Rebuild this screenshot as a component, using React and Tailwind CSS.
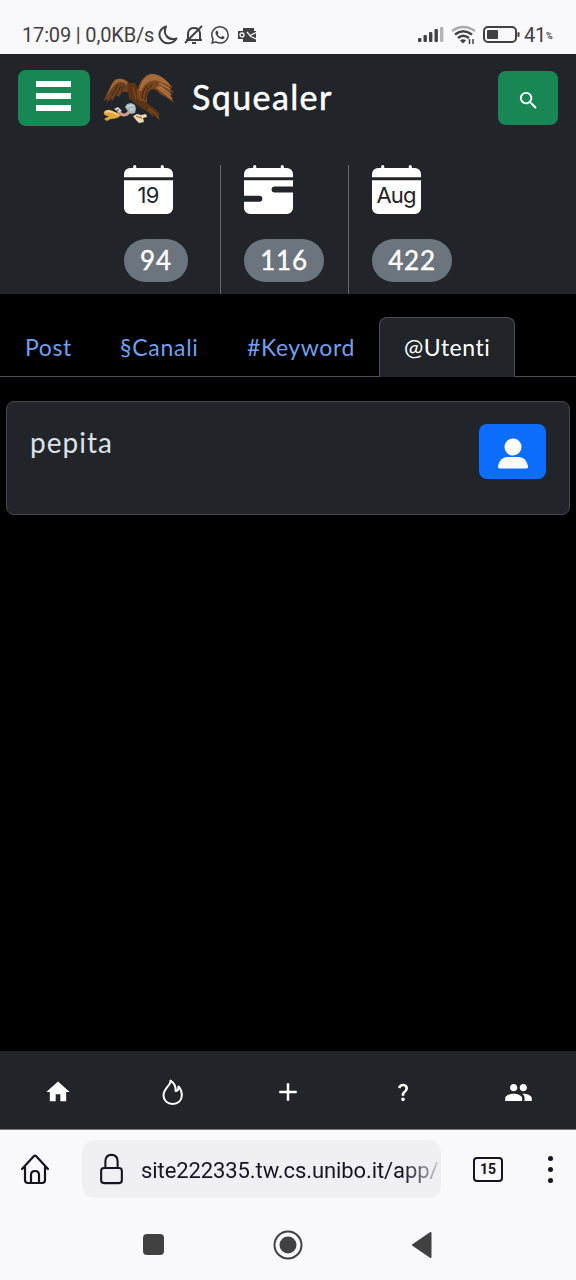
import { MdHome, MdAdd, MdPeople, MdSearch, MdQuestionMark } from "react-icons/md";
import { BsCalendarFill, BsCalendarRangeFill, BsWhatsapp } from "react-icons/bs";

function Vulture() {
  return (
    <svg viewBox="0 0 72 50" className="h-[50px] w-[72px]">
      <path d="M31 9 L27 10 C22 4 15 3 11 7 C6 13 4 21 0 27 L4 25 L4 28 L8 24 L9 27 L13 21 L16 23 L19 18 L25 18 L27 26 Z" fill="#6b4020" />
      <path d="M27 11 C22 4 15 3 11 7 C8 11 6 17 3 22 C8 16 12 8 18 8 Q22 8 25 13Z" fill="#a0683a" />
      <path d="M15 11 L8 23 M18 12 L13 21 M21 12 L18 18" stroke="#3b2210" strokeWidth="0.8" fill="none" />
      <path d="M24 9 L32 9 L37 20 L45 30 L52 35 L57 40 L55 42 L58 48 L50 40 L45 38 L40 35 L33 30 L26 24 Z" fill="#5a3414" />
      <path d="M34 22 C34 12 39 2 47 0 C57 -1 63 6 70 14 L66 13 L71 19 L66 18 L71 29 L63 23 L57 20 C52 14 47 13 44 22 L44 29 L36 26 Z" fill="#75461f" />
      <path d="M36 17 C38 5 44 0 50 0 C59 1 65 8 69 13 L58 8 C50 4 42 8 38 17 Z" fill="#a46a38" />
      <path d="M56 9 L67 15 M56 12 L68 21 M54 13 L69 25" stroke="#b0713c" strokeWidth="1.8" fill="none" />
      <path d="M49 11 Q43 15 42 26 M44 12 Q39 17 39 25" stroke="#3b2210" strokeWidth="1" fill="none" />
      <path d="M30 13 L33 25 M34 15 L39 27 M46 34 L56 44 M45 36 L50 42" stroke="#854c20" strokeWidth="1.1" fill="none" />
      <path d="M1 38 C4 34 9 36 13 39 L18 41 C15 46 9 43 4 47 L1 45 L6 42 C2 42 0 40 1 38Z" fill="#dda83e" />
      <path d="M2 38 Q8 36 15 41" stroke="#f7d47a" strokeWidth="1.8" fill="none" />
      <path d="M15 37 Q21 45 27 37" stroke="#d1998a" strokeWidth="3" fill="none" />
      <path d="M11 35 L15 33 L19 37 L16 38Z" fill="#e2dde3" />
      <circle cx="15" cy="36" r=".8" fill="#222" />
      <path d="M22 33 L24 30 L28 29 L32 31 L33 35 L32 39 L28 40 L24 36 Z" fill="#a9babe" />
      <path d="M24 33 L28 31 L31 32 M27 36 L31 35" stroke="#e0e8ea" fill="none" />
      <path d="M30 42 L34 40 L38 41 L43 40 L44 43 L40 44 L41 48 L36 49 L33 46 Z" fill="#f0d9b2" />
      <path d="M33 42 L37 44 M37 42 L39 45" stroke="#855d35" strokeWidth="1" />
    </svg>
  );
}

function StatusBar() {
  return (
    <div className="flex h-[54px] shrink-0 items-center bg-[#f9f9fb] pt-[15px] pl-[22px] font-[Roboto] text-[20px] text-[#414143]">
      <span className="w-[133px] whitespace-nowrap tracking-[-0.16px]">17:09 | 0,0KB/s</span>
      <svg viewBox="0 0 20 20" className="ml-[3px] size-5" fill="none" stroke="currentColor" strokeWidth="2" strokeLinejoin="round">
        <path d="M8 1.5 C2 3.5 0 9 2.5 13.5 C6 20 15 19.5 18.5 13.5 C10 16 4.500 9 8 1.500Z" />
      </svg>
      <svg viewBox="0 0 20 20" className="ml-[6px] size-5" fill="none" stroke="currentColor" strokeWidth="2">
        <path d="M4 15 V8 Q5 3 10 3 Q15 3 16 8 V15 M2 15 H18 M8 18 H12 M18 1 L1 18" />
      </svg>
      <BsWhatsapp className="ml-[7px] size-[18px]" />
      <svg viewBox="0 0 18 14" className="ml-[9px] h-[14px] w-[18px]">
        <path d="M5 0H16V3H18V14H5Z M0 3H9V11H0Z" fill="#414143" />
        <circle cx="4" cy="7" r="2" fill="none" stroke="#f9f9fb" strokeWidth="1.3" />
        <path d="M9 4 L12 7.5 L18 4.500 M12 8 L18 11" stroke="#f9f9fb" strokeWidth="1.2" fill="none" />
      </svg>
      <svg viewBox="0 0 26 18" className="ml-[162px] h-[18px] w-[26px]" fill="#414143">
        <rect y="12" width="3.4" height="4" rx="1" />
        <rect x="5.5" y="9" width="3.4" height="7" rx="1" />
        <rect x="11" y="6" width="3.4" height="10" rx="1" />
        <rect x="16.5" y="3" width="3.4" height="13" rx="1" />
        <rect x="22" y="1" width="3.4" height="15" rx="1" fill="#b4b4b6" />
      </svg>
      <svg viewBox="0 0 25 20" className="ml-[7px] h-5 w-[25px]" fill="none" stroke="#414143" strokeWidth="2.5">
        <path d="M1 6 Q12 -2 24 6" stroke="#aaaaac" />
        <path d="M4 9.5 Q12 3 21 9.5 M7 13 Q12 8.5 18 13" />
        <path d="M9 15.5 Q12 13 15 15.5 L12 18.5Z" fill="#414143" stroke="none" />
        <path d="M18.5 14V19 M22 19V14" strokeWidth="1.5" />
      </svg>
      <svg viewBox="0 0 37 17" className="ml-[7px] h-[17px] w-[37px]">
        <rect x="1" y="1" width="32" height="15" rx="4" fill="none" stroke="#414143" strokeWidth="2" />
        <rect x="4" y="4" width="11" height="9" rx="1" fill="#414143" />
        <rect x="34.5" y="6" width="2" height="5" rx="1" fill="#414143" />
      </svg>
      <span className="ml-[4px] tracking-[-0.2px]">41</span>
      <span className="mt-1 text-[9px] font-bold">%</span>
    </div>
  );
}

function Header() {
  return (
    <header className="h-[240px] shrink-0 bg-[#212529]">
      <div className="flex h-[86px] items-center px-[18px]">
        <button className="mt-[2px] flex h-[56px] w-[72px] flex-col items-center gap-[6px] rounded-lg bg-[#198754] pt-[11px] pr-px">
          <span className="h-[6px] w-[35px] bg-white" />
          <span className="h-[6px] w-[35px] bg-white" />
          <span className="h-[6px] w-[35px] bg-white" />
        </button>
        <div className="mt-[3px] ml-[13px]"><Vulture /></div>
        <h1 className="-mt-px ml-[17px] font-[Lato] text-[34px] tracking-[1.4px] text-white [-webkit-text-stroke:0.5px_white]">Squealer</h1>
        <button className="mt-0.5 ml-auto flex h-[54px] w-[60px] items-center justify-center rounded-lg bg-[#198754] pt-1 text-white">
          <MdSearch className="size-[23px]" />
        </button>
      </div>
      <div className="flex pt-[25px] font-[Lato] text-[26px] tracking-[0.8px] text-white">
        <Quota icon={<BsCalendarFill className="size-[49px]" />} label="19" value="94" className="w-[221px] border-r pl-[124px]" pill="w-16" />
        <Quota icon={<BsCalendarRangeFill className="size-[49px]" />} label="" value="116" className="w-[128px] border-r pl-[23px]" pill="w-20" />
        <Quota icon={<BsCalendarFill className="size-[49px]" />} label="Aug" value="422" className="pl-[23px]" pill="w-20" />
      </div>
    </header>
  );
}

function Quota({ icon, label, value, className, pill }) {
  return (
    <div className={`h-[129px] border-[#64686c] ${className}`}>
      <div className="relative h-[49px]">
        {icon}
        <span className="absolute top-[17px] left-0 w-[48px] text-center font-[Inter] text-[22px] leading-[26px] tracking-[-0.9px] text-[#212529]">{label}</span>
      </div>
      <div className={`mt-[25px] flex h-[43px] items-center justify-center rounded-full bg-[#6c757d] [-webkit-text-stroke:0.4px_white] ${pill}`}>{value}</div>
    </div>
  );
}

function Tabs() {
  return (
    <nav className="mt-[23px] flex h-[60px] shrink-0 border-b border-[#495057] font-[Lato] text-[23px] text-[#719fee]">
      <a className="w-[95px] pt-[13px] pl-[25px] tracking-[0.6px]">Post</a>
      <a className="w-[128px] pt-[13px] pl-[25px] tracking-[0.75px]">§Canali</a>
      <a className="w-[156px] pt-[13px] pl-[24px] tracking-[0.6px]">#Keyword</a>
      <a className="h-[60px] w-[136px] rounded-t-lg border border-b-0 border-[#495057] bg-[#212529] pt-[12px] pl-[24px] tracking-[0.5px] text-white">@Utenti</a>
    </nav>
  );
}

export default function App() {
  return (
    <div className="flex h-[1280px] w-[576px] flex-col overflow-hidden bg-black">
      <StatusBar />
      <Header />
      <Tabs />
      <main className="flex-1 px-[6px] pt-6">
        <section className="flex h-[114px] items-start justify-between rounded-lg border border-[#43474b] bg-[#212529] px-[23px] pt-[22px]">
          <span className="pt-px font-[Lato] text-[28px] leading-[34px] tracking-[1px] text-[#dee2e6]">pepita</span>
          <button className="flex h-[55px] w-[67px] items-center justify-center rounded-lg bg-[#0d6efd]">
            <svg viewBox="0 0 30 31" className="mt-[3px] h-[31px] w-[30px]" fill="white">
              <circle cx="15" cy="9" r="8.5" />
              <path d="M0 28 Q2 19 10 19 H20 Q28 19 30 28 V29 Q30 30.5 28 30.5 H2 Q0 30.5 0 29Z" />
            </svg>
          </button>
        </section>
      </main>
      <nav className="grid h-[78px] shrink-0 grid-cols-5 place-items-center bg-[#212529] pt-1 text-white">
        <MdHome className="size-[28px]" />
        <svg viewBox="0 0 36 36" className="size-9" fill="none" stroke="white" strokeWidth="2" strokeLinejoin="round">
          <path d="M15.5 6.5 C16.500 11 8.500 14 8.500 21.500 C8.500 26.500 12.500 30 17.700 30 C23 30 26.800 26.500 26.800 21.500 C26.800 18 25.500 14.500 23.500 12.500 C23.500 15 22.500 17 20.600 17 C21 12.500 18.500 8.500 15.500 6.500Z" />
        </svg>
        <MdAdd className="size-[30px]" />
        <MdQuestionMark className="size-[22px]" />
        <MdPeople className="size-[29px]" />
      </nav>
      <div className="flex h-[82px] shrink-0 items-center border-t border-[#77797d] bg-[#f9f9fb] text-[#16141f]">
        <svg viewBox="0 0 30 32" className="mb-[4px] ml-5 h-8 w-[30px]" fill="none" stroke="currentColor" strokeWidth="2.2" strokeLinejoin="round" strokeLinecap="round">
          <path d="M2 16 L14 3 Q15 2 16 3 L28 16 M5 14 V27 Q5 30 8 30 H22 Q25 30 25 27 V14 M11 30 V22 Q11 18 15 18 Q19 18 19 22 V30" />
        </svg>
        <div className="mb-[3px] ml-8 flex h-[58px] w-[359px] items-center rounded-[13px] bg-[#f0f0f4] pl-[17px]">
          <svg viewBox="0 0 25 34" className="h-[32px] w-[25px] shrink-0" fill="none" stroke="currentColor" strokeWidth="2.2">
            <rect x="1.5" y="16" width="22" height="16" rx="3" />
            <path d="M6 16 V9 Q6 2 12.5 2 Q19 2 19 9 V16" />
          </svg>
          <span className="ml-[17px] bg-linear-to-r from-[#16141f] from-88% to-[#c5c5ca] bg-clip-text pt-[3px] font-[Roboto] text-[22px] tracking-[-0.09px] whitespace-nowrap text-transparent">site222335.tw.cs.unibo.it/app/</span>
        </div>
        <div className="mb-[2px] ml-8 flex h-[25px] w-[30px] items-center justify-center rounded-[4px] border-2 border-current font-[Roboto] text-[14px] font-bold">15</div>
        <div className="mb-[2px] ml-[45px] flex flex-col gap-[6px]">
          <i className="size-[5px] rounded-full bg-current" />
          <i className="size-[5px] rounded-full bg-current" />
          <i className="size-[5px] rounded-full bg-current" />
        </div>
      </div>
      <div className="flex h-[69px] shrink-0 items-center bg-[#f9f9fb]">
        <div className="mb-[2px] ml-[143px] size-[21px] rounded bg-[#414141]" />
        <svg viewBox="0 0 30 32" className="mb-[2px] ml-[109px] h-8 w-[30px]">
          <circle cx="15" cy="16" r="13.5" fill="none" stroke="#414141" strokeWidth="2" />
          <circle cx="15" cy="16" r="8.5" fill="#414141" />
        </svg>
        <svg viewBox="0 0 20 26" className="mb-[2px] ml-[109px] h-[26px] w-5">
          <path d="M18.5 1 V25 L1 13Z" fill="#414141" stroke="#414141" strokeWidth="2" strokeLinejoin="round" />
        </svg>
      </div>
    </div>
  );
}
